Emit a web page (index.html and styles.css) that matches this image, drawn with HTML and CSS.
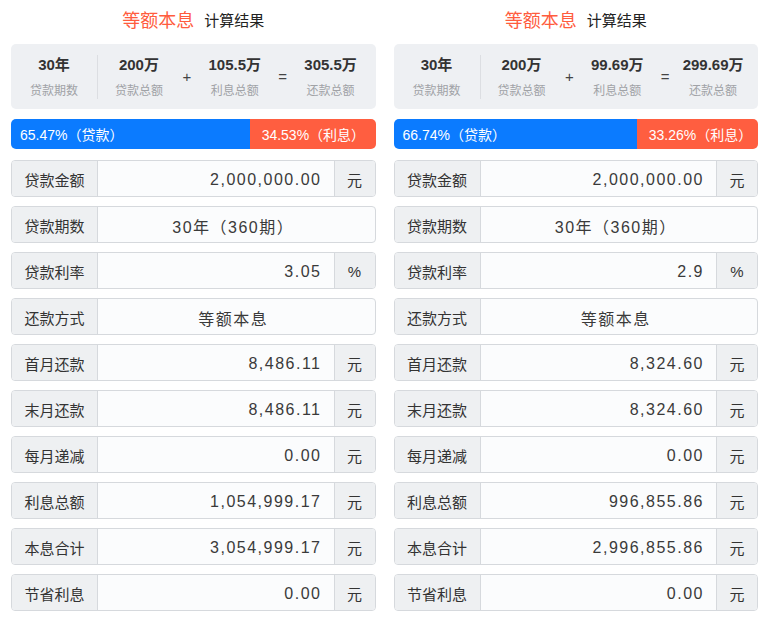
FILE: index.html
```html
<!DOCTYPE html>
<html lang="zh">
<head>
<meta charset="utf-8">
<title>等额本息 计算结果</title>
<link rel="stylesheet" href="styles.css">
</head>
<body>
<div class="page">
  <section class="panel">
    <h1 class="title"><span class="title-main">等额本息</span><span class="title-sub">计算结果</span></h1>
    <div class="summary">
      <div class="sum-item first"><b>30年</b><span>贷款期数</span></div>
      <div class="divider"></div>
      <div class="sum-item"><b>200万</b><span>贷款总额</span></div>
      <div class="op">+</div>
      <div class="sum-item"><b>105.5万</b><span>利息总额</span></div>
      <div class="op">=</div>
      <div class="sum-item"><b>305.5万</b><span>还款总额</span></div>
    </div>
    <div class="bar">
      <div class="bar-loan" style="width:65.47%">65.47%（贷款）</div>
      <div class="bar-interest">34.53%（利息）</div>
    </div>
    <div class="rows">
      <div class="row"><div class="label">贷款金额</div><div class="value">2,000,000.00</div><div class="unit">元</div></div>
      <div class="row"><div class="label">贷款期数</div><div class="value center">30年（360期）</div></div>
      <div class="row"><div class="label">贷款利率</div><div class="value">3.05</div><div class="unit">%</div></div>
      <div class="row"><div class="label">还款方式</div><div class="value center">等额本息</div></div>
      <div class="row"><div class="label">首月还款</div><div class="value">8,486.11</div><div class="unit">元</div></div>
      <div class="row"><div class="label">末月还款</div><div class="value">8,486.11</div><div class="unit">元</div></div>
      <div class="row"><div class="label">每月递减</div><div class="value">0.00</div><div class="unit">元</div></div>
      <div class="row"><div class="label">利息总额</div><div class="value">1,054,999.17</div><div class="unit">元</div></div>
      <div class="row"><div class="label">本息合计</div><div class="value">3,054,999.17</div><div class="unit">元</div></div>
      <div class="row"><div class="label">节省利息</div><div class="value">0.00</div><div class="unit">元</div></div>
    </div>
  </section>
  <section class="panel">
    <h1 class="title"><span class="title-main">等额本息</span><span class="title-sub">计算结果</span></h1>
    <div class="summary">
      <div class="sum-item first"><b>30年</b><span>贷款期数</span></div>
      <div class="divider"></div>
      <div class="sum-item"><b>200万</b><span>贷款总额</span></div>
      <div class="op">+</div>
      <div class="sum-item"><b>99.69万</b><span>利息总额</span></div>
      <div class="op">=</div>
      <div class="sum-item"><b>299.69万</b><span>还款总额</span></div>
    </div>
    <div class="bar">
      <div class="bar-loan" style="width:66.74%">66.74%（贷款）</div>
      <div class="bar-interest">33.26%（利息）</div>
    </div>
    <div class="rows">
      <div class="row"><div class="label">贷款金额</div><div class="value">2,000,000.00</div><div class="unit">元</div></div>
      <div class="row"><div class="label">贷款期数</div><div class="value center">30年（360期）</div></div>
      <div class="row"><div class="label">贷款利率</div><div class="value">2.9</div><div class="unit">%</div></div>
      <div class="row"><div class="label">还款方式</div><div class="value center">等额本息</div></div>
      <div class="row"><div class="label">首月还款</div><div class="value">8,324.60</div><div class="unit">元</div></div>
      <div class="row"><div class="label">末月还款</div><div class="value">8,324.60</div><div class="unit">元</div></div>
      <div class="row"><div class="label">每月递减</div><div class="value">0.00</div><div class="unit">元</div></div>
      <div class="row"><div class="label">利息总额</div><div class="value">996,855.86</div><div class="unit">元</div></div>
      <div class="row"><div class="label">本息合计</div><div class="value">2,996,855.86</div><div class="unit">元</div></div>
      <div class="row"><div class="label">节省利息</div><div class="value">0.00</div><div class="unit">元</div></div>
    </div>
  </section>
</div>
</body>
</html>
```

FILE: styles.css
```css
* { box-sizing: border-box; }
html, body { margin: 0; padding: 0; background: #ffffff; }
body {
  font-family: "Liberation Sans", "Noto Sans CJK SC", sans-serif;
  color: #333333;
}
.page {
  display: flex;
  gap: 18px;
  padding: 0 16px 0 11px;
}
.panel {
  width: 365px;
  display: flex;
  flex-direction: column;
}
.title {
  margin: 0;
  height: 44px;
  display: flex;
  align-items: center;
  justify-content: center;
  gap: 10px;
  font-weight: normal;
  padding-bottom: 6px;
}
.title-main {
  font-size: 18px;
  color: #ff5c3e;
}
.title-sub {
  font-size: 15px;
  color: #222222;
}
.summary {
  height: 65px;
  background: #eef0f3;
  border-radius: 5px;
  display: flex;
  align-items: center;
  padding-right: 4px;
  padding-bottom: 3px;
}
.sum-item {
  flex: 1;
  display: flex;
  flex-direction: column;
  align-items: center;
  gap: 7px;
}
.sum-item.first { flex: 0 0 86px; }
.sum-item b {
  font-size: 15px;
  font-weight: bold;
  color: #333333;
}
.sum-item span {
  font-size: 12px;
  color: #a0a2a6;
}
.divider {
  width: 1px;
  height: 44px;
  margin-top: 3px;
  background: #dcdee2;
}
.op {
  width: 14px;
  text-align: center;
  font-size: 15px;
  color: #444444;
  padding-top: 3px;
}
.bar {
  margin-top: 10px;
  height: 30px;
  display: flex;
  border-radius: 5px;
  overflow: hidden;
  font-size: 14px;
  color: #ffffff;
}
.bar-loan {
  background: #0b7bff;
  display: flex;
  align-items: center;
  padding-left: 9px;
  white-space: nowrap;
}
.bar-interest {
  flex: 1;
  background: #ff5e40;
  display: flex;
  align-items: center;
  padding-left: 12px;
  white-space: nowrap;
}
.rows {
  margin-top: 11px;
  display: flex;
  flex-direction: column;
  gap: 9px;
}
.row {
  height: 37px;
  display: flex;
  border: 1px solid #d6d9dd;
  border-radius: 4px;
  overflow: hidden;
  background: #fbfcfd;
}
.label {
  flex: 0 0 86px;
  background: #eef0f2;
  border-right: 1px solid #d6d9dd;
  display: flex;
  align-items: center;
  justify-content: center;
  font-size: 15px;
  color: #333333;
  padding-top: 1px;
}
.value {
  flex: 1;
  display: flex;
  align-items: center;
  justify-content: flex-end;
  padding-right: 12px;
  padding-top: 2px;
  font-size: 16px;
  letter-spacing: 1.5px;
  color: #3a3a3a;
}
.value.center {
  justify-content: center;
  padding-right: 0;
  padding-left: 0;
  margin-left: -6px;
}
.unit {
  flex: 0 0 41px;
  background: #eef0f2;
  border-left: 1px solid #d6d9dd;
  display: flex;
  align-items: center;
  justify-content: center;
  font-size: 15px;
  color: #333333;
  padding-top: 1px;
}
```
